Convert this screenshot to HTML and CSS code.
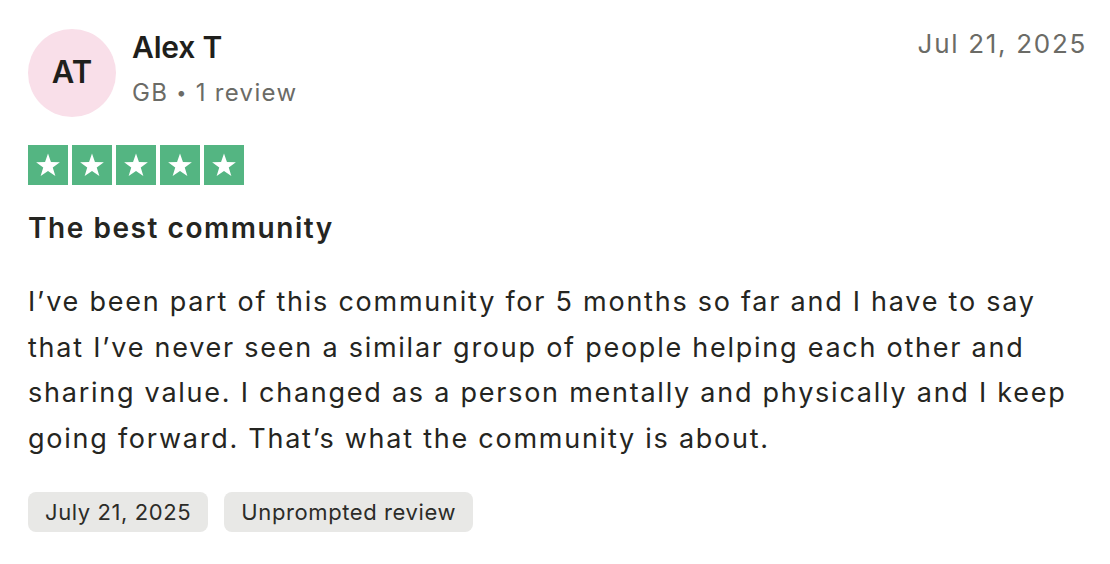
FILE: index.html
```html
<!DOCTYPE html>
<html lang="en">
<head>
<meta charset="utf-8">
<title>Review</title>
<link rel="stylesheet" href="styles.css">
</head>
<body>
<article class="review">
  <header class="review-header">
    <div class="avatar">AT</div>
    <div class="author">
      <div class="author-name">Alex T</div>
      <div class="author-meta">GB <span class="dot">•</span> 1 review</div>
    </div>
    <time class="review-date">Jul 21, 2025</time>
  </header>

  <div class="stars" aria-label="Rated 5 out of 5">
    <span class="star"><svg viewBox="0 0 40 40"><polygon points="20,8.5 22.94,16.95 31.89,17.14 24.76,22.55 27.35,31.11 20,26 12.65,31.11 15.24,22.55 8.11,17.14 17.06,16.95"/></svg></span>
    <span class="star"><svg viewBox="0 0 40 40"><polygon points="20,8.5 22.94,16.95 31.89,17.14 24.76,22.55 27.35,31.11 20,26 12.65,31.11 15.24,22.55 8.11,17.14 17.06,16.95"/></svg></span>
    <span class="star"><svg viewBox="0 0 40 40"><polygon points="20,8.5 22.94,16.95 31.89,17.14 24.76,22.55 27.35,31.11 20,26 12.65,31.11 15.24,22.55 8.11,17.14 17.06,16.95"/></svg></span>
    <span class="star"><svg viewBox="0 0 40 40"><polygon points="20,8.5 22.94,16.95 31.89,17.14 24.76,22.55 27.35,31.11 20,26 12.65,31.11 15.24,22.55 8.11,17.14 17.06,16.95"/></svg></span>
    <span class="star"><svg viewBox="0 0 40 40"><polygon points="20,8.5 22.94,16.95 31.89,17.14 24.76,22.55 27.35,31.11 20,26 12.65,31.11 15.24,22.55 8.11,17.14 17.06,16.95"/></svg></span>
  </div>

  <h2 class="review-title">The best community</h2>

  <p class="review-body">I’ve been part of this community for 5 months so far and I have to say that I’ve never seen a similar group of people helping each other and sharing value. I changed as a person mentally and physically and I keep going forward. That’s what the community is about.</p>

  <div class="tags">
    <span class="tag">July 21, 2025</span>
    <span class="tag">Unprompted review</span>
  </div>
</article>
</body>
</html>
```

FILE: styles.css
```css
* { box-sizing: border-box; }

html, body {
  margin: 0;
  padding: 0;
  background: #ffffff;
}

body {
  font-family: Inter, "Noto Sans", "Liberation Sans", sans-serif;
  color: #252521;
}

.review {
  padding: 29px 24px 0 28px;
}

.review-header {
  display: flex;
  align-items: flex-start;
}

.avatar {
  width: 88px;
  height: 88px;
  border-radius: 50%;
  background: #f9dfe9;
  display: flex;
  align-items: center;
  justify-content: center;
  padding-bottom: 3px;
  font-size: 31px;
  font-weight: 600;
  color: #1f1f1c;
  letter-spacing: 0;
  flex-shrink: 0;
}

.author {
  margin-left: 16px;
  flex: 1;
}

.author-name {
  font-size: 30px;
  line-height: 36px;
  font-weight: 600;
  color: #1f1f1c;
  letter-spacing: -0.2px;
}

.author-meta {
  margin-top: 12px;
  font-size: 24px;
  line-height: 32px;
  color: #6b6b66;
  letter-spacing: 1.3px;
}

.dot {
  font-size: 18px;
  position: relative;
  top: -2px;
}

.review-date {
  font-size: 26px;
  line-height: 30px;
  color: #6b6b66;
  letter-spacing: 1.7px;
  margin-right: -1px;
}

.stars {
  display: flex;
  gap: 4px;
  margin-top: 28px;
}

.star {
  width: 40px;
  height: 40px;
  background: #54b582;
  display: block;
}

.star svg {
  display: block;
  width: 40px;
  height: 40px;
  fill: #ffffff;
}

.review-title {
  margin: 25px 0 0;
  font-size: 28px;
  line-height: 36px;
  font-weight: 600;
  color: #252521;
  letter-spacing: 1.55px;
}

.review-body {
  margin: 33px 0 0;
  max-width: 1046px;
  font-size: 27px;
  line-height: 45.5px;
  color: #252521;
  letter-spacing: 1.75px;
}

.tags {
  display: flex;
  gap: 16px;
  margin-top: 31px;
}

.tag {
  height: 40px;
  display: flex;
  align-items: center;
  padding: 0 17px;
  background: #e8e8e6;
  border-radius: 8px;
  font-size: 22px;
  color: #2c2c28;
  letter-spacing: 0.6px;
}
```
